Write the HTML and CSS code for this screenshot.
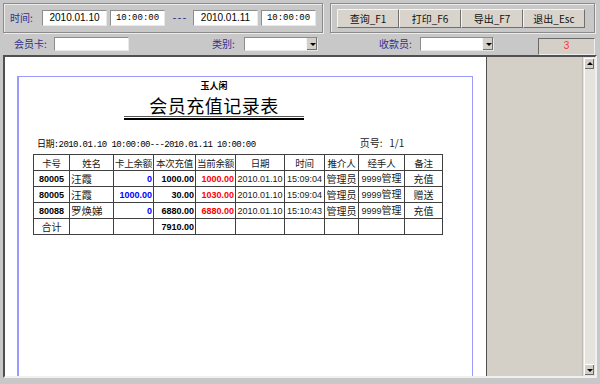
FILE: index.html
```html
<!DOCTYPE html>
<html lang="zh">
<head>
    <meta charset="UTF-8">
    <title>会员充值记录表</title>
    <link rel="stylesheet" href="styles.css">
</head>
<body>
    <div class="toolbar">
        <div class="group date-group">
            <span class="label time-label">时间:</span>
            <div class="field date">2010.01.10</div>
            <div class="field time">10:00:00</div>
            <span class="dash">---</span>
            <div class="field date">2010.01.11</div>
            <div class="field time">10:00:00</div>
        </div>
        <div class="group btn-group">
            <button type="button">查询_F1</button>
            <button type="button">打印_F6</button>
            <button type="button">导出_F7</button>
            <button type="button">退出_Esc</button>
        </div>
    </div>

    <div class="filters">
        <span class="label card-label">会员卡:</span>
        <div class="field card"></div>
        <span class="label kind-label">类别:</span>
        <div class="field combo kind"><span class="drop"></span></div>
        <span class="label cashier-label">收款员:</span>
        <div class="field combo cashier"><span class="drop"></span></div>
        <div class="count">3</div>
    </div>

    <div class="viewer">
        <div class="paper">
            <div class="frame">
                <div class="title-block">
                    <div class="shop">玉人闲</div>
                    <div class="title">会员充值记录表</div>
                    <div class="underline"></div>
                </div>
                <div class="info">
                    <span class="range">日期:2010.01.10 10:00:00---2010.01.11 10:00:00</span>
                    <span class="page">页号:&nbsp;&nbsp;&nbsp;1/1</span>
                </div>
                <table class="report">
                    <colgroup>
                        <col style="width:36px"><col style="width:44px"><col style="width:40px">
                        <col style="width:42px"><col style="width:40px"><col style="width:49px">
                        <col style="width:40px"><col style="width:34px"><col style="width:46px">
                        <col style="width:38px">
                    </colgroup>
                    <tr class="head">
                        <td>卡号</td><td>姓名</td><td>卡上余额</td><td>本次充值</td><td>当前余额</td>
                        <td>日期</td><td>时间</td><td>推介人</td><td>经手人</td><td>备注</td>
                    </tr>
                    <tr>
                        <td class="num bold">80005</td><td class="name">汪霞</td>
                        <td class="num bold amt blue">0</td><td class="num bold amt">1000.00</td><td class="num bold amt red">1000.00</td>
                        <td class="num">2010.01.10</td><td class="num">15:09:04</td><td class="mid">管理员</td><td class="mid"><span class="num">9999</span>管理</td><td class="mid">充值</td>
                    </tr>
                    <tr>
                        <td class="num bold">80005</td><td class="name">汪霞</td>
                        <td class="num bold amt blue">1000.00</td><td class="num bold amt">30.00</td><td class="num bold amt red">1030.00</td>
                        <td class="num">2010.01.10</td><td class="num">15:09:04</td><td class="mid">管理员</td><td class="mid"><span class="num">9999</span>管理</td><td class="mid">赠送</td>
                    </tr>
                    <tr>
                        <td class="num bold">80088</td><td class="name">罗焕娣</td>
                        <td class="num bold amt blue">0</td><td class="num bold amt">6880.00</td><td class="num bold amt red">6880.00</td>
                        <td class="num">2010.01.10</td><td class="num">15:10:43</td><td class="mid">管理员</td><td class="mid"><span class="num">9999</span>管理</td><td class="mid">充值</td>
                    </tr>
                    <tr>
                        <td>合计</td><td></td><td></td><td class="num bold amt">7910.00</td><td></td>
                        <td></td><td></td><td></td><td></td><td></td>
                    </tr>
                </table>
            </div>
        </div>
        <div class="side"></div>
        <div class="vscroll">
            <div class="arrow up"></div>
            <div class="track"></div>
            <div class="arrow down"></div>
        </div>
    </div>
</body>
</html>
```

FILE: styles.css
```css
body {
    margin: 0;
    width: 600px;
    height: 384px;
    overflow: hidden;
    background-color: #c8c8c8;
    font-family: "Noto Sans CJK SC", sans-serif;
    font-size: 11px;
    color: #000;
}
.toolbar {
    display: flex;
    gap: 7px;
    padding: 3px 0 0 3px;
    height: 30px;
}
.group {
    display: flex;
    align-items: center;
    box-sizing: border-box;
    height: 30px;
    border: 1px solid #8a8a8a;
    box-shadow: inset 1px 1px 0 #ececec, 1px 1px 0 #ececec;
}
.date-group {
    width: 320px;
    padding-left: 6px;
    gap: 3px;
}
.label {
    color: #303090;
    font-size: 10px;
    line-height: 14px;
}
.time-label {
    width: 29px;
}
.field {
    box-sizing: border-box;
    height: 16px;
    background-color: #fff;
    border-top: 1px solid #8c8c8c;
    border-left: 1px solid #8c8c8c;
    border-right: 1px solid #e8e8e8;
    border-bottom: 1px solid #e8e8e8;
    text-align: center;
    line-height: 14px;
}
.date {
    width: 65px;
    font-family: "Liberation Sans", sans-serif;
    font-size: 10px;
}
.time {
    width: 55px;
    font-family: "Liberation Mono", monospace;
    font-size: 9px;
}
.dash {
    width: 22px;
    text-align: center;
    color: #303090;
    font-family: "Liberation Mono", monospace;
    font-size: 10px;
    letter-spacing: -1px;
}
.btn-group {
    width: 265px;
    padding-left: 6px;
}
button {
    box-sizing: border-box;
    width: 62px;
    height: 19px;
    margin-top: 1px;
    padding: 0;
    background-color: #d8d4cc;
    border-top: 1px solid #f4f4f4;
    border-left: 1px solid #f4f4f4;
    border-right: 1px solid #707070;
    border-bottom: 1px solid #707070;
    font-family: "Noto Sans CJK SC", sans-serif;
    font-size: 10px;
    line-height: 16px;
    color: #111;
}
.filters {
    display: flex;
    align-items: flex-start;
    height: 22px;
    box-sizing: border-box;
    padding-top: 4px;
}
.filters .field {
    height: 14px;
}
.card-label {
    margin-left: 14px;
    width: 40px;
}
.card {
    width: 75px;
}
.kind-label {
    margin-left: 83px;
    width: 32px;
}
.combo {
    position: relative;
    width: 74px;
}
.drop {
    position: absolute;
    right: 0;
    top: 0;
    width: 10px;
    height: 12px;
    background-color: #d4d0c8;
    border-left: 1px solid #f4f4f4;
    box-shadow: inset -1px -1px 0 #707070;
}
.drop::after {
    content: "";
    position: absolute;
    left: 3px;
    top: 5px;
    border-left: 3px solid transparent;
    border-right: 3px solid transparent;
    border-top: 3px solid #000;
}
.cashier-label {
    margin-left: 61px;
    width: 41px;
}
.count {
    box-sizing: border-box;
    width: 57px;
    height: 17px;
    margin: 1px 0 0 44px;
    background-color: #d4d0c8;
    border-top: 1px solid #6a6a6a;
    border-left: 1px solid #6a6a6a;
    border-right: 1px solid #eeeeee;
    border-bottom: 1px solid #eeeeee;
    color: #ff3030;
    font-family: "Liberation Sans", sans-serif;
    font-size: 10px;
    line-height: 13px;
    text-align: center;
}
.viewer {
    display: flex;
    box-sizing: border-box;
    width: 594px;
    height: 323px;
    margin-left: 3px;
    border-top: 2px solid #505050;
    border-left: 2px solid #505050;
    border-right: 2px solid #f0f0f0;
    border-bottom: 2px solid #f0f0f0;
    box-shadow: inset 1px 1px 0 #303030;
}
.paper {
    box-sizing: border-box;
    width: 482px;
    height: 100%;
    padding: 19px 13px 0 12px;
    background-color: #fff;
    border-right: 1px solid #505050;
    overflow: hidden;
}
.frame {
    height: 320px;
    border-top: 1px solid #9a9aff;
    border-right: 1px solid #9a9aff;
    border-left: 2px solid #9a9aff;
}
.side {
    flex: 1;
    background-color: #d4d0c8;
}
.vscroll {
    display: flex;
    flex-direction: column;
    width: 12px;
    background-color: #e6e3de;
    border-left: 1px solid #bdb9b1;
}
.arrow {
    position: relative;
    height: 10px;
    margin: 1px 1px 0 1px;
    background-color: #d4d0c8;
    border-top: 1px solid #fff;
    border-left: 1px solid #fff;
    box-shadow: inset -1px -1px 0 #6a6a6a;
}
.arrow::after {
    content: "";
    position: absolute;
    left: 2px;
    border-left: 3px solid transparent;
    border-right: 3px solid transparent;
}
.up::after {
    top: 3px;
    border-bottom: 3px solid #000;
}
.down {
    margin: 0 1px 1px 1px;
}
.down::after {
    top: 4px;
    border-top: 3px solid #000;
}
.track {
    flex: 1;
    border-left: 1px solid #fbfbfb;
    margin-left: 1px;
}
.title-block {
    width: 180px;
    margin-left: 105px;
    padding-top: 3px;
    text-align: center;
}
.shop {
    font-size: 9px;
    font-weight: bold;
    line-height: 11px;
    margin-bottom: 4px;
}
.title {
    font-size: 18px;
    line-height: 21px;
    letter-spacing: 0.5px;
}
.underline {
    height: 1px;
    border-top: 1px solid #555;
    border-bottom: 2px solid #000;
}
.info {
    margin: 17px 0 0 18px;
    line-height: 12px;
    font-family: "Liberation Mono", "Noto Sans CJK SC", monospace;
    font-size: 9px;
    letter-spacing: -0.6px;
    white-space: nowrap;
}
.range {
    display: inline-block;
    width: 318px;
}
.page {
    font-family: "Noto Sans CJK SC", sans-serif;
    font-size: 10px;
    letter-spacing: 0;
    color: #222;
}
.report {
    margin: 3px 0 0 14px;
    border-collapse: collapse;
    table-layout: fixed;
    width: 409px;
    font-size: 10px;
}
.report td {
    height: 15px;
    padding: 0 1px;
    border: 1px solid #404040;
    line-height: 14px;
    text-align: center;
    white-space: nowrap;
    overflow: hidden;
    color: #1a1a1a;
}
.report .head td {
    padding: 0;
    font-size: 9.5px;
    letter-spacing: -0.2px;
}
.report td.name {
    text-align: left;
    font-size: 10.5px;
}
.num {
    font-family: "Liberation Sans", sans-serif;
    font-size: 9px;
}
.bold {
    font-weight: bold;
}
.report td.bold {
    color: #000;
}
.report td.amt {
    text-align: right;
}
.report td.blue {
    color: #0000ff;
}
.report td.red {
    color: #ff0000;
}
```
